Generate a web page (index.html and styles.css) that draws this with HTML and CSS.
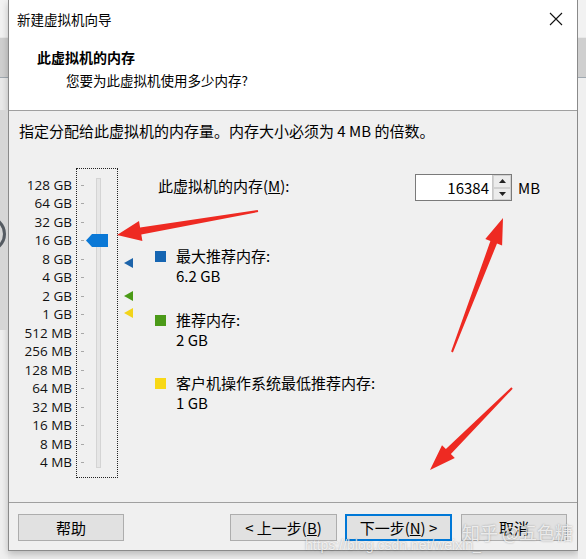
FILE: index.html
```html
<!DOCTYPE html>
<html lang="zh-CN">
<head>
<meta charset="utf-8">
<title>新建虚拟机向导</title>
<link rel="stylesheet" href="styles.css">
</head>
<body>
<div class="screen">
  <div class="strip strip-left">
    <div class="s-top"></div>
    <div class="s-band"></div>
    <div class="s-mid"></div>
    <div class="s-dark"><span class="s-ring"></span></div>
    <div class="s-rest"></div>
  </div>

  <div class="dialog">
    <div class="titlebar">
      <span class="title">新建虚拟机向导</span>
      <svg class="close" width="14" height="14" viewBox="0 0 14 14"><path d="M1 1L13 13M13 1L1 13" stroke="#111" stroke-width="1.1" fill="none"/></svg>
    </div>

    <div class="header">
      <div class="h-title">此虚拟机的内存</div>
      <div class="h-sub">您要为此虚拟机使用多少内存?</div>
    </div>

    <div class="content">
      <div class="intro">指定分配给此虚拟机的内存量。内存大小必须为 4 MB 的倍数。</div>

      <div class="main">
        <div class="slider">
          <div class="labels">
            <div>128 GB</div><div>64 GB</div><div>32 GB</div><div>16 GB</div>
            <div>8 GB</div><div>4 GB</div><div>2 GB</div><div>1 GB</div>
            <div>512 MB</div><div>256 MB</div><div>128 MB</div><div>64 MB</div>
            <div>32 MB</div><div>16 MB</div><div>8 MB</div><div>4 MB</div>
          </div>
          <div class="track-box">
            <div class="ticks">
              <i></i><i></i><i></i><i></i><i></i><i></i><i></i><i></i>
              <i></i><i></i><i></i><i></i><i></i><i></i><i></i><i></i>
            </div>
            <div class="rail"></div>
            <svg class="thumb" width="22" height="13" viewBox="0 0 22 13"><polygon points="0,6.5 6,0 22,0 22,13 6,13" fill="#0a78d6"/></svg>
          </div>
          <div class="markers">
            <span class="mk mk-blue" style="top:89.5px"></span>
            <span class="mk mk-green" style="top:122.5px"></span>
            <span class="mk mk-yellow" style="top:139.5px"></span>
          </div>
        </div>

        <div class="panel">
          <div class="mem-row">
            <span class="mem-label">此虚拟机的内存(<u>M</u>):</span>
            <div class="spin">
              <div class="spin-value">16384</div>
              <div class="spin-btns">
                <div class="sb"><svg width="7" height="4" viewBox="0 0 7 4"><polygon points="0,4 3.5,0 7,4" fill="#222"/></svg></div>
                <div class="sb"><svg width="7" height="4" viewBox="0 0 7 4"><polygon points="0,0 3.5,4 7,0" fill="#222"/></svg></div>
              </div>
            </div>
            <span class="unit">MB</span>
          </div>

          <div class="legend">
            <div class="lg">
              <span class="sq sq-blue"></span>
              <div class="lg-text"><div>最大推荐内存:</div><div>6.2 GB</div></div>
            </div>
            <div class="lg">
              <span class="sq sq-green"></span>
              <div class="lg-text"><div>推荐内存:</div><div>2 GB</div></div>
            </div>
            <div class="lg">
              <span class="sq sq-yellow"></span>
              <div class="lg-text"><div>客户机操作系统最低推荐内存:</div><div>1 GB</div></div>
            </div>
          </div>
        </div>
      </div>
    </div>

    <div class="footer">
      <button class="btn btn-help">帮助</button>
      <div class="spacer"></div>
      <button class="btn">&lt; 上一步(<u>B</u>)</button>
      <button class="btn btn-focus">下一步(<u>N</u>) &gt;</button>
      <button class="btn">取消</button>
    </div>
  </div>

  <div class="strip strip-right">
    <div class="s-top"></div>
    <div class="s-band"></div>
    <div class="s-rest"></div>
  </div>
</div>

<svg class="arrows" width="586" height="559" viewBox="0 0 586 559">
  <polygon fill="#ee2a22" points="117,235 142.4,240.9 141.3,234.5 258.2,212 257.8,210 140.1,227.5 139,221.1"/>
  <polygon fill="#ee2a22" points="503,218 502.1,245.5 497,243.5 452.9,352.4 451.1,351.6 490.4,241.1 485.3,239.1"/>
  <polygon fill="#ee2a22" points="430,470 454.8,458 450.9,454.1 512.7,388.7 511.3,387.3 445.9,449.1 442,445.2"/>
</svg>

<div class="wm wm-url">https://blog.csdn.net/weixin_</div>
<div class="wm wm-zh">知乎 @五色糖</div>
</body>
</html>
```

FILE: styles.css
```css
* { box-sizing: border-box; }

html, body {
  margin: 0;
  padding: 0;
}

body {
  width: 586px;
  height: 559px;
  overflow: hidden;
  position: relative;
  background: #ececec;
  font-family: "Noto Sans CJK SC", "Noto Sans", sans-serif;
  color: #000;
}

.screen {
  display: flex;
  height: 559px;
}

/* background window strips */
.strip {
  width: 8px;
  display: flex;
  flex-direction: column;
  flex: none;
}
.s-top { height: 37px; background: #f2f2f2; }
.s-band { height: 41px; background: #cfcfcf; border-top: 1px solid #e8e8e8; border-bottom: 1px solid #9fa8b0; }
.s-mid { height: 32px; background: #e9e9e9; }
.s-dark { height: 220px; background: #d6d6d6; position: relative; overflow: hidden; }
.s-ring {
  position: absolute;
  left: -30px;
  top: 106px;
  width: 36px;
  height: 36px;
  border: 3px solid #555b62;
  border-radius: 50%;
}
.s-rest { flex: 1; background: #efefef; }
.strip-right .s-rest { background: #f0f0f0; }

/* dialog */
.dialog {
  width: 570px;
  height: 551px;
  flex: none;
  display: flex;
  flex-direction: column;
  border: 1px solid #8a8a8a;
  border-top: none;
  background: #f0f0f0;
  box-shadow: 0 3px 7px rgba(0,0,0,0.22);
}

.titlebar {
  height: 37px;
  background: #fff;
  display: flex;
  align-items: center;
  justify-content: space-between;
  padding: 0 14px 0 8px;
}
.title {
  font-size: 13.5px;
  line-height: 18px;
}
.close { display: block; }

.header {
  height: 74px;
  background: #fff;
  border-bottom: 1px solid #a0a0a0;
  padding: 10px 0 0 28px;
}
.h-title {
  font-size: 14px;
  font-weight: bold;
  line-height: 20px;
}
.h-sub {
  font-size: 13.5px;
  line-height: 20px;
  margin-top: 3px;
  padding-left: 29px;
}

.content {
  flex: 1;
  padding: 10px 0 0 10px;
  font-size: 15px;
  line-height: 20px;
}

.intro { height: 20px; }

.main {
  display: flex;
  margin-top: 27px;
}

/* slider */
.slider {
  display: flex;
  align-items: flex-start;
}
.labels {
  width: 53px;
  padding-top: 7.75px;
  text-align: right;
  font-family: "Open Sans", "Noto Sans", sans-serif;
  font-size: 13.5px;
  color: #111;
}
.labels div {
  height: 18.5px;
  line-height: 18.5px;
}
.track-box {
  position: relative;
  width: 42px;
  height: 310px;
  margin-left: 4px;
  border: 1px dotted #222;
  display: flex;
  align-items: flex-start;
}
.ticks {
  margin-left: 4px;
  padding-top: 6.75px;
  display: flex;
  flex-direction: column;
}
.ticks i {
  display: flex;
  align-items: center;
  height: 18.5px;
  width: 3px;
}
.ticks i::before {
  content: "";
  display: block;
  width: 3px;
  height: 1px;
  background: #a8a8a8;
}
.rail {
  width: 5px;
  height: 290px;
  margin-left: 12px;
  margin-top: 9px;
  background: #e6e6e6;
  border: 1px solid #d4d4d4;
}
.thumb {
  position: absolute;
  left: 9px;
  top: 65px;
}

.markers {
  position: relative;
  width: 9px;
  height: 310px;
  margin-left: 6px;
}
.mk {
  position: absolute;
  left: 0;
  width: 0;
  height: 0;
  border-top: 5.5px solid transparent;
  border-bottom: 5.5px solid transparent;
  border-right: 9px solid #1d64aa;
}
.mk-green { border-right-color: #4a9a16; }
.mk-yellow { border-right-color: #f2d41a; }

/* right panel */
.panel {
  margin-left: 22px;
  width: 390px;
}
.mem-row {
  display: flex;
  align-items: center;
  margin-top: 6px;
  height: 27px;
}
.mem-label {
  width: 260px;
  padding-left: 3px;
  line-height: 20px;
  margin-top: -3px;
}
.spin {
  display: flex;
  width: 97px;
  height: 27px;
  border: 1px solid #7a7a7a;
  background: #fff;
}
.spin-value {
  flex: 1;
  text-align: right;
  padding-right: 3px;
  line-height: 25px;
}
.spin-btns {
  width: 19px;
  display: flex;
  flex-direction: column;
  border-left: 1px solid #c8c8c8;
}
.sb {
  flex: 1;
  display: flex;
  align-items: center;
  justify-content: center;
  background: #ececec;
  border: 1px solid #d2d2d2;
}
.sb svg { display: block; }
.unit {
  margin-left: 6px;
}

.legend {
  margin-top: 45px;
  display: flex;
  flex-direction: column;
  gap: 23.5px;
}
.lg {
  display: flex;
  align-items: flex-start;
}
.sq {
  width: 11px;
  height: 11px;
  margin-top: 5px;
  margin-right: 10px;
  flex: none;
}
.sq-blue { background: #1565b2; }
.sq-green { background: #4b9a18; }
.sq-yellow { background: #f8d816; }

/* footer */
.footer {
  height: 48px;
  border-top: 1px solid #a0a0a0;
  display: flex;
  align-items: flex-start;
  padding: 11px 10px 0 9px;
  gap: 8px;
}
.spacer { flex: 1; }
.btn {
  height: 27px;
  width: 107px;
  padding: 0;
  font-family: "Noto Sans CJK SC", "Noto Sans", sans-serif;
  font-size: 15px;
  line-height: 24px;
  color: #000;
  background: #e1e1e1;
  border: 1px solid #adadad;
}
.btn-help { width: 106px; }
.btn-focus {
  border: 1px solid #0078d7;
  box-shadow: inset 0 0 0 1px #0078d7;
}
.btn:last-child { width: 106px; margin-left: 1px; }

/* overlays: annotation arrows and watermark */
.arrows {
  position: absolute;
  left: 0;
  top: 0;
  pointer-events: none;
}
.wm {
  position: absolute;
  color: rgba(255,255,255,0.75);
  text-shadow: 0 0 2px rgba(0,0,0,0.35);
  pointer-events: none;
  white-space: nowrap;
}
.wm-url {
  left: 305px;
  top: 536px;
  font-family: "Liberation Sans", sans-serif;
  font-size: 14px;
  line-height: 18px;
}
.wm-zh {
  left: 462px;
  top: 520px;
  font-size: 18px;
  line-height: 24px;
}
```
